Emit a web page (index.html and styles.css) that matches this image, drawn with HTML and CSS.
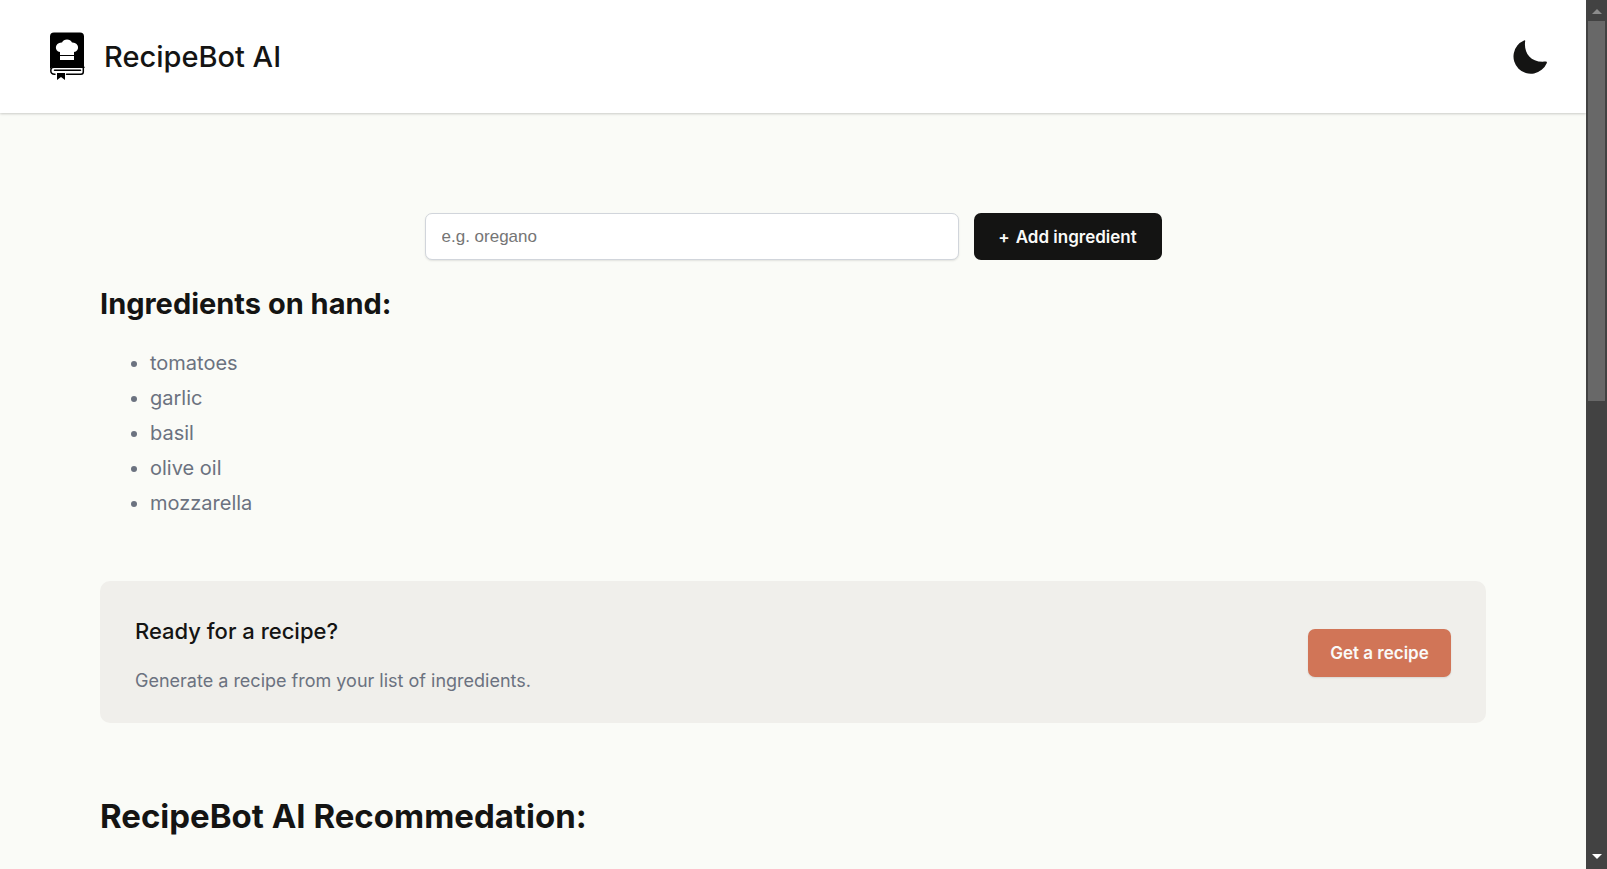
FILE: index.html
```html
<!DOCTYPE html>
<html lang="en">
<head>
<meta charset="utf-8">
<meta name="viewport" content="width=device-width, initial-scale=1">
<title>RecipeBot AI</title>
<link rel="stylesheet" href="styles.css">
</head>
<body>
<div class="window">
  <div class="page">
    <header class="header">
      <div class="brand">
        <svg class="brand-logo" viewBox="0 0 36 51" aria-hidden="true">
          <path d="M5 1.500H31Q35 1.500 35 5.500V36H5Q1 36 1 39V5.500Q1 1.500 5 1.500Z"/>
          <path class="hat" d="M11 24V21C5 20.500 5.500 11 13 11.500C14.500 7.500 21.500 7.500 23 11.500C30.500 11 31 20.500 25 21V24ZM11 25H25V29H11Z"/>
          <path class="line" d="M35 36.200H5Q1.800 36.200 1.800 39.800Q1.800 43.200 5.500 43.200H6M17.500 43.200H32Q34.300 43.200 34.300 41V35M5.500 39.200H31.500"/>
          <path d="M8 42H16V49L12 46L8 49Z"/>
        </svg>
        <h1 class="brand-name">RecipeBot AI</h1>
      </div>
      <button class="theme-button" type="button" aria-label="Toggle dark mode">
        <svg class="moon" viewBox="0 0 36 36" aria-hidden="true">
          <path d="M13.200 2C11.500 13 18 24 33.500 22.500Q35.500 22.300 34.700 24.200A17.300 17.300 0 1 1 12 1.500Q13.300 1 13.200 2Z"/>
        </svg>
      </button>
    </header>
    <main class="main">
      <form class="add-form">
        <input class="ingredient-input" type="text" placeholder="e.g. oregano" aria-label="Add ingredient">
        <button class="add-button" type="button">Add ingredient</button>
      </form>
      <section class="ingredients">
        <h2 class="list-title">Ingredients on hand:</h2>
        <ul class="list">
          <li>tomatoes</li>
          <li>garlic</li>
          <li>basil</li>
          <li>olive oil</li>
          <li>mozzarella</li>
        </ul>
      </section>
      <section class="ready">
        <div class="ready-text">
          <h3 class="ready-title">Ready for a recipe?</h3>
          <p class="ready-note">Generate a recipe from your list of ingredients.</p>
        </div>
        <button class="recipe-button" type="button">Get a recipe</button>
      </section>
      <h2 class="result-title">RecipeBot AI Recommedation:</h2>
    </main>
  </div>
  <div class="scrollbar" aria-hidden="true">
    <svg class="arrow arrow-up" viewBox="0 0 10 6"><path d="M0 5L5 0L10 5Z"/></svg>
    <div class="track"><div class="thumb"></div></div>
    <svg class="arrow" viewBox="0 0 10 6"><path d="M0 0H10L5 5Z"/></svg>
  </div>
</div>
</body>
</html>
```
FILE: styles.css
```css
* { box-sizing: border-box; }

body {
  margin: 0;
  font-family: Inter, sans-serif;
  color: #141413;
  background: #fafbf7;
}

h1, h2, h3, p, ul { margin: 0; }
button { border: 0; font-family: inherit; cursor: pointer; }

.window { display: flex; height: 100vh; overflow: hidden; }
.page { flex: 1; min-width: 0; overflow: hidden; }

.header {
  display: flex;
  align-items: center;
  justify-content: space-between;
  padding: 31px 38px 31px 49px;
  background: #fff;
  box-shadow: 0 1px 3px rgba(0, 0, 0, .1), 0 1px 2px rgba(0, 0, 0, .1);
}
.brand { display: flex; align-items: center; gap: 19px; }
.brand-logo { width: 36px; height: 51px; }
.brand-logo .hat { fill: #fff; }
.brand-logo .line { fill: none; stroke: #000; stroke-width: 1.500; stroke-linecap: round; }
.brand-name { font-size: 29px; line-height: 38px; font-weight: 500; }
.theme-button { display: flex; padding: 0; background: none; }
.moon { width: 36px; height: 36px; fill: #141413; }

.main { padding: 100px; }

.add-form { display: flex; gap: 15px; max-width: 737px; margin: 0 auto; }
.ingredient-input {
  flex: 1;
  min-width: 0;
  height: 47px;
  padding: 0 16px;
  border: 1px solid #d1d5db;
  border-radius: 7px;
  background: #fff;
  box-shadow: 0 1px 2px rgba(0, 0, 0, .1);
  font: 17px "Liberation Sans", sans-serif;
}
.ingredient-input::placeholder { color: #757575; }
.add-button {
  width: 188px;
  border-radius: 7px;
  background: #141413;
  color: #fafaf8;
  font-size: 17px;
  font-weight: 600;
}
.add-button::before { content: "+"; margin-right: 6px; }

.list-title { margin-top: 25px; font-size: 29px; line-height: 38px; font-weight: 700; }
.list {
  margin-top: 23px;
  padding-left: 50px;
  color: #6b7280;
  font-size: 20px;
  line-height: 35px;
}

.ready {
  display: flex;
  align-items: center;
  justify-content: space-between;
  margin-top: 60px;
  padding: 35px 35px 33px;
  border-radius: 10px;
  background: #f0efeb;
}
.ready-title { font-size: 22px; line-height: 30px; font-weight: 500; }
.ready-note { margin-top: 26px; color: #6b7280; font-size: 18px; line-height: 18px; }
.recipe-button {
  width: 143px;
  height: 48px;
  border-radius: 7px;
  background: #d17557;
  color: #fafaf8;
  box-shadow: 0 1px 2px rgba(0, 0, 0, .1);
  font-size: 17px;
  font-weight: 600;
}
.result-title { margin-top: 72px; font-size: 33px; line-height: 42px; font-weight: 700; }

.scrollbar {
  display: flex;
  flex-direction: column;
  align-items: center;
  justify-content: space-between;
  width: 21px;
  padding: 9px 2px;
  background: #424242;
}
.arrow { width: 10px; height: 6px; fill: #fff; }
.arrow-up { fill: #8b8b8b; }
.track { flex: 1; width: 100%; padding: 6px 0; }
.thumb { height: 46%; background: #686868; }
```
